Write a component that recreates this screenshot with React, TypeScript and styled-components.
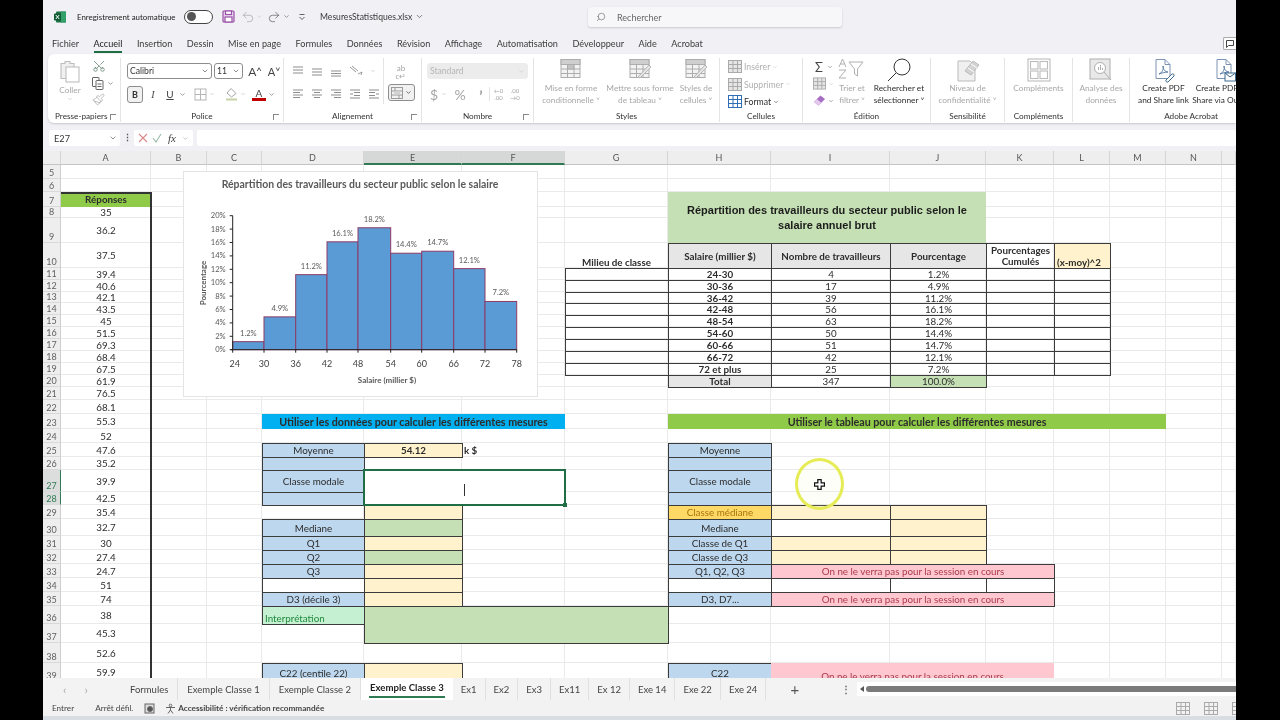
import React from "react"
import styled, { createGlobalStyle } from "styled-components"
import { ChevronDown, Paintbrush, Redo2, Scissors, Search, Undo2 } from "lucide-react"

const GlobalStyle = createGlobalStyle`
  html, body { margin: 0; padding: 0; background: #000; }
  body { font-family: "Lato", "Liberation Sans", sans-serif; }
  * { box-sizing: border-box; }
`

const COLS = [90, 56, 55, 102, 98, 103, 103, 103, 119, 96, 68, 56, 56, 56, 14]
const COL_NAMES = ["A", "B", "C", "D", "E", "F", "G", "H", "I", "J", "K", "L", "M", "N", ""]
const ROWS = [14, 13, 15, 11, 25, 25, 12, 12, 11, 12, 12, 12, 12, 12, 12, 12, 13, 14, 15, 14, 14, 13, 22, 13, 14, 17, 14, 14, 14, 14, 14, 18, 19, 20, 19]
const TEMPLATE = `18px ${COLS.map((w) => w + "px").join(" ")}`
const ANSWERS = ["35", "36.2", "37.5", "39.4", "40.6", "42.1", "43.5", "45", "51.5", "69.3", "68.4", "67.5", "61.9", "76.5", "68.1", "55.3", "52", "47.6", "35.2", "39.9", "42.5", "35.4", "32.7", "30", "27.4", "24.7", "51", "74", "38", "45.3", "52.6", "59.9"]

type Tone = "none" | "white" | "blue" | "yellow" | "sage" | "pink" | "grey" | "gold" | "mint" | "sky" | "lime"

const TONES: Record<Tone, string> = {
  none: "transparent",
  white: "#fff",
  blue: "#bdd7ee",
  yellow: "#fff2cc",
  sage: "#c5e0b4",
  pink: "#ffc7d0",
  grey: "#e7e6e6",
  gold: "#ffd966",
  mint: "#c6f0d2",
  sky: "#00b0f0",
  lime: "#8fcb48",
}

type CellDef = {
  c: string
  r: number
  cs?: number
  rs?: number
  text?: string
  tone?: Tone
  box?: boolean
  bold?: boolean
  ink?: string
  align?: string
  valign?: string
  size?: number
}

const colIndex = (c: string) => COL_NAMES.indexOf(c) + 2

const bracket = [
  ["24-30", "4", "1.2%"],
  ["30-36", "17", "4.9%"],
  ["36-42", "39", "11.2%"],
  ["42-48", "56", "16.1%"],
  ["48-54", "63", "18.2%"],
  ["54-60", "50", "14.4%"],
  ["60-66", "51", "14.7%"],
  ["66-72", "42", "12.1%"],
  ["72 et plus", "25", "7.2%"],
]

const PINK_TEXT = "On ne le verra pas pour la session en cours"
const RED_INK = "#ab3a4c"

const CELLS: CellDef[] = [
  { c: "H", r: 7, cs: 3, rs: 3, tone: "sage", text: "Répartition des travailleurs du secteur public selon le salaire annuel brut", bold: true, size: 11 },
  { c: "G", r: 10, text: "Milieu de classe", bold: true, valign: "flex-end" },
  { c: "H", r: 10, text: "Salaire (millier $)", tone: "grey", box: true, bold: true },
  { c: "I", r: 10, text: "Nombre de travailleurs", tone: "grey", box: true, bold: true },
  { c: "J", r: 10, text: "Pourcentage", tone: "grey", box: true, bold: true },
  { c: "K", r: 10, text: "Pourcentages Cumulés", box: true, bold: true },
  { c: "L", r: 10, text: "(x-moy)^2", tone: "yellow", box: true, bold: true, align: "flex-start", valign: "flex-end" },
  ...bracket.flatMap((row, i): CellDef[] => [
    { c: "G", r: 11 + i, box: true },
    { c: "H", r: 11 + i, text: row[0], box: true, bold: true },
    { c: "I", r: 11 + i, text: row[1], box: true },
    { c: "J", r: 11 + i, text: row[2], box: true },
    { c: "K", r: 11 + i, box: true },
    { c: "L", r: 11 + i, box: true },
  ]),
  { c: "H", r: 20, text: "Total", tone: "grey", box: true, bold: true },
  { c: "I", r: 20, text: "347", box: true },
  { c: "J", r: 20, text: "100.0%", tone: "sage", box: true },

  { c: "D", r: 23, cs: 3, tone: "sky", text: "Utiliser les données pour calculer les différentes mesures", bold: true, size: 10.7 },
  { c: "H", r: 23, cs: 6, tone: "lime", text: "Utiliser le tableau pour calculer les différentes mesures", bold: true, size: 10.7 },

  { c: "D", r: 25, text: "Moyenne", tone: "blue", box: true },
  { c: "E", r: 25, text: "54.12", tone: "yellow", box: true, bold: true },
  { c: "F", r: 25, text: "k $", bold: true, align: "flex-start" },
  { c: "D", r: 26, tone: "blue", box: true },
  { c: "D", r: 27, text: "Classe modale", tone: "blue", box: true },
  { c: "D", r: 28, tone: "blue", box: true },
  { c: "E", r: 29, tone: "yellow", box: true },
  { c: "D", r: 30, text: "Mediane", tone: "blue", box: true },
  { c: "E", r: 30, tone: "sage", box: true },
  { c: "D", r: 31, text: "Q1", tone: "blue", box: true },
  { c: "E", r: 31, tone: "yellow", box: true },
  { c: "D", r: 32, text: "Q2", tone: "blue", box: true },
  { c: "E", r: 32, tone: "sage", box: true },
  { c: "D", r: 33, text: "Q3", tone: "blue", box: true },
  { c: "E", r: 33, tone: "yellow", box: true },
  { c: "D", r: 34, tone: "white", box: true },
  { c: "E", r: 34, tone: "yellow", box: true },
  { c: "D", r: 35, text: "D3 (décile 3)", tone: "blue", box: true },
  { c: "E", r: 35, tone: "yellow", box: true },
  { c: "D", r: 36, text: "Interprétation", tone: "mint", box: true, ink: "#1f8a3c", align: "flex-start", valign: "flex-end" },
  { c: "E", r: 36, cs: 3, rs: 2, tone: "sage", box: true },
  { c: "D", r: 39, text: "C22 (centile 22)", tone: "blue", box: true },
  { c: "E", r: 39, tone: "yellow", box: true },

  { c: "H", r: 25, text: "Moyenne", tone: "blue", box: true },
  { c: "H", r: 26, tone: "blue", box: true },
  { c: "H", r: 27, text: "Classe modale", tone: "blue", box: true },
  { c: "H", r: 28, tone: "blue", box: true },
  { c: "H", r: 29, text: "Classe médiane", tone: "gold", box: true, ink: "#a8740a" },
  { c: "I", r: 29, tone: "yellow", box: true },
  { c: "J", r: 29, tone: "yellow", box: true },
  { c: "H", r: 30, text: "Mediane", tone: "blue", box: true },
  { c: "I", r: 30, tone: "white", box: true },
  { c: "J", r: 30, tone: "yellow", box: true },
  { c: "H", r: 31, text: "Classe de Q1", tone: "blue", box: true },
  { c: "I", r: 31, tone: "yellow", box: true },
  { c: "J", r: 31, tone: "yellow", box: true },
  { c: "H", r: 32, text: "Classe de Q3", tone: "blue", box: true },
  { c: "I", r: 32, tone: "yellow", box: true },
  { c: "J", r: 32, tone: "yellow", box: true },
  { c: "H", r: 33, text: "Q1, Q2, Q3", tone: "blue", box: true },
  { c: "I", r: 33, cs: 3, text: PINK_TEXT, tone: "pink", box: true, ink: RED_INK },
  { c: "H", r: 34, tone: "white", box: true },
  { c: "I", r: 34, tone: "white", box: true },
  { c: "J", r: 34, tone: "white", box: true },
  { c: "K", r: 34, tone: "white", box: true },
  { c: "H", r: 35, text: "D3, D7...", tone: "blue", box: true },
  { c: "I", r: 35, cs: 3, text: PINK_TEXT, tone: "pink", box: true, ink: RED_INK },
  { c: "H", r: 39, text: "C22", tone: "blue", box: true },
  { c: "I", r: 39, cs: 3, text: PINK_TEXT, tone: "pink", ink: RED_INK, valign: "flex-end" },
]

const Frame = styled.div`
  width: 1280px;
  height: 720px;
  background: #000;
  padding: 0 44px 0 43px;
  overflow: hidden;
`

const Window = styled.div`
  width: 1193px;
  height: 720px;
  display: flex;
  flex-direction: column;
  background: #f0f0f5;
  color: #333;
  overflow: hidden;
  position: relative;
  filter: blur(0.3px);
`

const TitleBar = styled.div`
  height: 33px;
  flex: none;
  display: flex;
  align-items: center;
  padding-left: 11px;
  font-size: 8.6px;
  position: relative;
`

const AutoSave = styled.span`
  margin-left: 11px;
  width: 101px;
  flex: none;
  font-size: 7.9px;
  white-space: nowrap;
  color: #222;
`

const Toggle = styled.span`
  width: 29px;
  height: 14px;
  margin-left: 6px;
  border: 1px solid #444;
  border-radius: 7px;
  background: #fff;
  display: flex;
  align-items: center;
  padding-left: 2px;
  &::before {
    content: "";
    width: 9px;
    height: 9px;
    border-radius: 50%;
    background: #555;
  }
`

const QuickIcons = styled.span`
  display: flex;
  align-items: center;
  margin-left: 9px;
  gap: 2px;
`

const FileName = styled.span`
  margin-left: 14px;
  font-size: 8.6px;
  display: flex;
  align-items: center;
  gap: 3px;
  color: #3a3a3a;
`

const SearchBox = styled.div`
  position: absolute;
  left: 545px;
  top: 7px;
  width: 254px;
  height: 20px;
  background: #f7f7f9;
  border-radius: 3px;
  box-shadow: 0 1px 2px #c9c9cf;
  display: flex;
  align-items: center;
  gap: 11px;
  padding-left: 8px;
  font-size: 9px;
  color: #666;
`

const MenuBar = styled.div`
  height: 21px;
  flex: none;
  display: flex;
  align-items: flex-start;
  padding: 5px 0 0 9px;
  gap: 14.5px;
  font-size: 9.1px;
  position: relative;
`

const MenuItem = styled.span<{ $active?: boolean }>`
  height: 15px;
  color: ${(p) => (p.$active ? "#222" : "#3c3c3c")};
  border-bottom: ${(p) => (p.$active ? "2px solid #1e6e42" : "none")};
`

const CommentBtn = styled.span`
  position: absolute;
  right: 0;
  top: 4px;
  width: 13px;
  height: 13px;
  border: 1px solid #aaa;
  border-right: none;
  border-radius: 2px 0 0 2px;
  background: #fff;
  display: flex;
  align-items: center;
  justify-content: center;
`

const Ribbon = styled.div`
  height: 69px;
  flex: none;
  margin-left: 5px;
  padding: 4px 0 1px;
  display: flex;
  background: #fff;
  border-radius: 6px 0 0 6px;
  box-shadow: 0 1px 2px #c6c6cc;
`

const Group = styled.div<{ $w: number }>`
  width: ${(p) => p.$w}px;
  flex: none;
  display: flex;
  flex-direction: column;
  border-right: 1px solid #e4e4e4;
  position: relative;
  &:last-child {
    border-right: none;
  }
`

const GroupBody = styled.div`
  flex: 1;
  display: flex;
  min-height: 0;
`

const GroupLabel = styled.div<{ $left?: boolean }>`
  height: 10px;
  flex: none;
  text-align: ${(p) => (p.$left ? "left" : "center")};
  padding-left: ${(p) => (p.$left ? "7px" : "0")};
  font-size: 8.2px;
  line-height: 9px;
  color: #333;
  white-space: nowrap;
`

const Launcher = styled.span`
  position: absolute;
  right: 4px;
  bottom: 2px;
  width: 6px;
  height: 6px;
  border-left: 1px solid #888;
  border-top: 1px solid #888;
`

const LargeBtn = styled.div<{ $w: number; $off?: boolean }>`
  width: ${(p) => p.$w}px;
  flex: none;
  display: flex;
  flex-direction: column;
  align-items: center;
  font-size: 8.3px;
  line-height: 12px;
  text-align: center;
  white-space: nowrap;
  color: ${(p) => (p.$off ? "#a8a8a8" : "#2e2e2e")};
`

const LargeIcon = styled.div<{ $tall?: boolean }>`
  height: ${(p) => (p.$tall ? 26 : 24)}px;
  padding-top: ${(p) => (p.$tall ? 2 : 0)}px;
  display: flex;
  align-items: flex-start;
  justify-content: center;
`

const ClipColumn = styled.div`
  display: flex;
  flex-direction: column;
  gap: 3px;
  padding-top: 1px;
`

const IconRow = styled.div<{ $gap?: number; $h?: number }>`
  display: flex;
  align-items: center;
  gap: ${(p) => p.$gap ?? 0}px;
  height: ${(p) => p.$h ?? 16}px;
`

const Stack = styled.div<{ $gap?: number; $pt?: number; $pl?: number; $w?: number }>`
  display: flex;
  flex-direction: column;
  gap: ${(p) => p.$gap ?? 0}px;
  padding: ${(p) => p.$pt ?? 0}px 0 0 ${(p) => p.$pl ?? 0}px;
  ${(p) => (p.$w ? `width: ${p.$w}px; flex: none;` : "")}
`

const AlignPanel = styled(Stack)`
  border-right: 1px solid #e4e4e4;
  height: 46px;
`

const Spacer = styled.span<{ $w: number }>`
  width: ${(p) => p.$w}px;
  flex: none;
`

const Select = styled.div<{ $w: number; $off?: boolean }>`
  width: ${(p) => p.$w}px;
  height: 16px;
  border: 1px solid ${(p) => (p.$off ? "#ececec" : "#8d8d8d")};
  border-radius: 3px;
  background: ${(p) => (p.$off ? "#ececec" : "#fff")};
  color: ${(p) => (p.$off ? "#b5b5b5" : "#333")};
  display: flex;
  align-items: center;
  justify-content: space-between;
  font-size: 8.6px;
  padding: 0 2px 0 2px;
`

const PressedBtn = styled.span<{ $w: number }>`
  width: ${(p) => p.$w}px;
  height: 17px;
  border: 1px solid #8d8d8d;
  border-radius: 3px;
  background: #f1f1f1;
  display: flex;
  align-items: center;
  justify-content: center;
  gap: 2px;
  font-size: 9px;
  font-weight: 700;
`

const GlyphBtn = styled.span<{ $w?: number; $serif?: boolean; $off?: boolean; $size?: number }>`
  width: ${(p) => p.$w ?? 14}px;
  flex: none;
  text-align: center;
  font-family: ${(p) => (p.$serif ? '"Liberation Serif", serif' : "inherit")};
  font-style: ${(p) => (p.$serif ? "italic" : "normal")};
  font-size: ${(p) => p.$size ?? 10}px;
  color: ${(p) => (p.$off ? "#a5a5a5" : "#444")};
`

const Underlined = styled(GlyphBtn)`
  text-decoration: underline;
`

const FontColor = styled(GlyphBtn)`
  border-bottom: 3px solid #c00000;
  line-height: 10px;
`

const WrapGlyph = styled(GlyphBtn)`
  line-height: 8px;
  height: 20px;
  padding-top: 3px;
`

const Decimals = styled(GlyphBtn)<{ $rule?: boolean }>`
  line-height: 7px;
  border-left: ${(p) => (p.$rule ? "1px solid #e4e4e4" : "none")};
`

const Thousands = styled(GlyphBtn)`
  font-weight: 900;
  line-height: 20px;
  height: 16px;
`

const CellCmd = styled.div<{ $off?: boolean }>`
  height: 17.5px;
  display: flex;
  align-items: center;
  gap: 2px;
  font-size: 8.7px;
  white-space: nowrap;
  color: ${(p) => (p.$off ? "#b0b0b0" : "#2e2e2e")};
`

const FormulaBar = styled.div`
  height: 28px;
  flex: none;
  padding: 7px 0 5px 6px;
  display: flex;
  align-items: stretch;
`

const NameBox = styled.div`
  width: 71px;
  background: #fff;
  border-radius: 2px;
  display: flex;
  align-items: center;
  justify-content: space-between;
  padding: 0 3px 0 5px;
  font-size: 9.2px;
`

const BarDots = styled.span`
  width: 14px;
  text-align: center;
  font-size: 9px;
  line-height: 16px;
  font-weight: 700;
  color: #555;
`

const FxBox = styled.div`
  width: 59px;
  background: #fff;
  border-radius: 2px;
  display: flex;
  align-items: center;
  gap: 4px;
  padding-left: 4px;
`

const FormulaInput = styled.div`
  flex: 1;
  margin-left: 4px;
  background: #fff;
  border-radius: 2px;
`

const ColHeaders = styled.div`
  height: 14px;
  flex: none;
  display: grid;
  grid-template-columns: ${TEMPLATE};
  background: #ececec;
`

const ColHead = styled.div<{ $on?: boolean }>`
  display: flex;
  align-items: center;
  justify-content: center;
  font-size: 9px;
  color: #555;
  background: ${(p) => (p.$on ? "#d6d8d7" : "#eeeeee")};
  border-right: 1px solid #d5d5d5;
  border-bottom: ${(p) => (p.$on ? "2px solid #2f7a52" : "1px solid #c4c4c4")};
`

const SheetWrap = styled.div`
  flex: 1;
  position: relative;
  overflow: hidden;
  background: #fff;
`

const Sheet = styled.div`
  display: grid;
  grid-template-columns: ${TEMPLATE};
  grid-template-rows: ${ROWS.map((h) => h + "px").join(" ")};
  color: #2c2c2c;
`

const RowHead = styled.div<{ $r: number; $on?: boolean }>`
  grid-column: 1;
  grid-row: ${(p) => p.$r - 4};
  background: ${(p) => (p.$on ? "#dcdedd" : "#eeeeee")};
  border-bottom: 1px solid #d8d8d8;
  border-right: ${(p) => (p.$on ? "1px solid #2f7a52" : "1px solid #cfcfcf")};
  color: ${(p) => (p.$on ? "#2f7a52" : "#5f5f5f")};
  font-size: 9px;
  line-height: 10px;
  display: flex;
  align-items: flex-end;
  justify-content: center;
`

const GridLine = styled.div<{ $c: number; $r: number }>`
  grid-column: ${(p) => p.$c};
  grid-row: ${(p) => p.$r};
  border-right: 1px solid #eaeaea;
  border-bottom: 1px solid #eaeaea;
`

const AnswerFrame = styled.div`
  grid-column: 2;
  grid-row: 3 / span 33;
  border-top: 2px solid #333;
  border-right: 2px solid #333;
  margin-right: -1px;
`

const Cell = styled.div<{
  $c: number
  $r: number
  $cs?: number
  $rs?: number
  $tone?: Tone
  $box?: boolean
  $bold?: boolean
  $ink?: string
  $align?: string
  $valign?: string
  $size?: number
}>`
  grid-column: ${(p) => p.$c} / span ${(p) => p.$cs ?? 1};
  grid-row: ${(p) => p.$r - 4} / span ${(p) => p.$rs ?? 1};
  display: flex;
  min-width: 0;
  min-height: 0;
  overflow: hidden;
  align-items: ${(p) => p.$valign ?? "center"};
  justify-content: ${(p) => p.$align ?? "center"};
  text-align: center;
  padding: 0 2px;
  line-height: 1.12;
  background: ${(p) => TONES[p.$tone ?? "none"]};
  font-weight: ${(p) => (p.$bold ? 700 : 400)};
  font-size: ${(p) => p.$size ?? 9.8}px;
  color: ${(p) => p.$ink ?? "#2c2c2c"};
  ${(p) => (p.$box ? "border: 1px solid #3b3b3b; margin: 0 -1px -1px 0;" : "")}
`

const TableTitle = styled.span`
  font-family: "Liberation Sans", Arial, sans-serif;
  line-height: 15px;
  padding: 0 14px;
  color: #1c1c1c;
`

const Selection = styled.div`
  grid-column: 6 / span 2;
  grid-row: 23 / span 2;
  background: #fff;
  border: 2px solid #1f6e45;
  margin: -1px -1px -1px -1px;
  display: flex;
  align-items: center;
  position: relative;
  padding-left: 99px;
  &::after {
    content: "";
    position: absolute;
    right: -3px;
    bottom: -3px;
    width: 4px;
    height: 4px;
    background: #1f6e45;
  }
`

const Caret = styled.span`
  width: 1px;
  height: 12px;
  background: #333;
  margin-top: 5px;
`

const ChartBox = styled.div`
  position: absolute;
  left: 140px;
  top: 6px;
  width: 355px;
  height: 226px;
  background: #fff;
  border: 1px solid #e4e4e4;
`

const CursorRing = styled.div`
  position: absolute;
  left: 752px;
  top: 293px;
  width: 49px;
  height: 52px;
  border: 3px solid #e6ec55;
  border-radius: 50%;
  background: rgba(250, 250, 200, 0.12);
  display: flex;
  align-items: center;
  justify-content: center;
`

const TabsBar = styled.div`
  height: 22px;
  flex: none;
  display: flex;
  align-items: center;
  background: #f3f3f3;
  font-size: 9.5px;
  color: #444;
  position: relative;
`

const TabArrows = styled.div`
  width: 78px;
  flex: none;
  display: flex;
  gap: 18px;
  padding-left: 20px;
  font-size: 12px;
  color: #aaa;
`

const Tab = styled.div<{ $active?: boolean; $wide?: boolean }>`
  height: 100%;
  flex: none;
  padding: 0 ${(p) => (p.$wide ? 9 : 8)}px;
  display: flex;
  align-items: center;
  border-right: ${(p) => (p.$active ? "none" : "1px solid #e0e0e0")};
  ${(p) =>
    p.$active
      ? `background: #fff; color: #1e1e1e; font-weight: 700; font-size: 9.6px; align-items: flex-start; padding-top: 4px; position: relative;
         &::after { content: ""; position: absolute; left: 8px; right: 8px; bottom: 2px; height: 2px; background: #2f7a52; }`
      : ""}
`

const AddTab = styled.span`
  margin-left: 24px;
  font-size: 15px;
  line-height: 15px;
  color: #555;
`

const TabDots = styled.span`
  margin-left: 42px;
  font-weight: 700;
  font-size: 10px;
  color: #666;
`

const ScrollTrack = styled.div`
  flex: 1;
  margin-left: 6px;
  height: 14px;
  background: #fff;
  display: flex;
  align-items: center;
  padding-left: 3px;
  gap: 2px;
  &::before {
    content: "";
    border-right: 4px solid #555;
    border-top: 3px solid transparent;
    border-bottom: 3px solid transparent;
  }
`

const ScrollThumb = styled.div`
  flex: 1;
  height: 6px;
  background: #7b7b7b;
  border-radius: 3px 0 0 3px;
`

const StatusBar = styled.div`
  height: 16px;
  flex: none;
  display: flex;
  align-items: center;
  padding-left: 9px;
  background: #f2f2f2;
  font-size: 8.2px;
  color: #444;
  position: relative;
`

const StatusItem = styled.span<{ $ml: number; $bold?: boolean }>`
  margin-left: ${(p) => p.$ml}px;
  font-weight: ${(p) => (p.$bold ? 700 : 400)};
  display: flex;
  align-items: center;
  gap: 2px;
  white-space: nowrap;
`

const ViewIcons = styled.div`
  margin-left: auto;
  display: flex;
  gap: 14px;
  margin-right: -10px;
`

const BottomStrip = styled.div`
  height: 4px;
  flex: none;
  background: #d8dde4;
`

function Lines({ rows, color = "#8d8d8d", size = 12 }: { rows: [number, number, number][]; color?: string; size?: number }) {
  return (
    <svg width={size} height={size} viewBox="0 0 12 12" stroke={color} strokeWidth="1" fill="none">
      {rows.map(([a, b, y]) => (
        <line key={y} x1={a} x2={b} y1={y} y2={y} />
      ))}
    </svg>
  )
}

function ExcelLogo() {
  return (
    <svg width="12" height="12" viewBox="0 0 12 12">
      <rect x="2" y="0.5" width="10" height="11" rx="1" fill="#1e7145" />
      <rect x="7" y="0.5" width="5" height="11" fill="#33a06a" />
      <rect x="0" y="2.5" width="7" height="7" rx="0.8" fill="#0f5c34" />
      <path d="M1.8 4 L5.2 8 M5.2 4 L1.8 8" stroke="#fff" strokeWidth="1" />
    </svg>
  )
}

function SaveIcon() {
  return (
    <svg width="13" height="13" viewBox="0 0 13 13" fill="none" stroke="#9a4fa8" strokeWidth="1.2">
      <rect x="1" y="1" width="11" height="11" rx="1" fill="#e9d9ee" />
      <rect x="3.5" y="1" width="6" height="3.5" fill="#fff" />
      <rect x="3" y="7" width="7" height="5" fill="#fff" />
    </svg>
  )
}

function QatIcon() {
  return (
    <svg width="8" height="8" viewBox="0 0 8 8" fill="none" stroke="#666">
      <path d="M1.500 1.500h5M1.500 4l2.500 2.500L6.500 4" />
    </svg>
  )
}

function PasteIcon() {
  return (
    <svg width="20" height="23" viewBox="0 0 20 23" fill="none" stroke="#bdbdbd" strokeWidth="1.1">
      <path d="M1 3.5h4v-2h5v2h4v15H1z" fill="#f0f0f0" />
      <rect x="6" y="7" width="13" height="15" fill="#fff" />
    </svg>
  )
}

function CopyIcon() {
  return (
    <svg width="12" height="13" viewBox="0 0 12 13" fill="none" stroke="#666" strokeWidth="1">
      <rect x="0.5" y="0.5" width="6.5" height="9" rx="0.5" />
      <rect x="4" y="3.5" width="7" height="9" fill="#fff" rx="0.5" />
      <path d="M5.5 7h4M5.5 9.5h4" />
    </svg>
  )
}

function BordersIcon({ color = "#b5b5b5" }: { color?: string }) {
  return (
    <svg width="13" height="13" viewBox="0 0 13 13" fill="none" stroke={color}>
      <rect x="1" y="1" width="11" height="11" />
      <path d="M6.5 1v11M1 6.5h11" />
    </svg>
  )
}

function FillIcon() {
  return (
    <svg width="13" height="14" viewBox="0 0 13 14" fill="none" stroke="#a5a5a5">
      <path d="M6 1.5 L11 6.5 L6.5 10 L2 6z" />
      <rect x="1" y="11.5" width="11" height="2" fill="#c7d3a5" stroke="none" />
    </svg>
  )
}

function OrientIcon() {
  return (
    <svg width="14" height="12" viewBox="0 0 14 12" fill="none" stroke="#9a9a9a">
      <path d="M1 2l6 5M3 1l6 5M9 9l4-2-1 3" />
    </svg>
  )
}

function MergeIcon() {
  return (
    <svg width="12" height="12" viewBox="0 0 12 12" fill="none" stroke="#9b9b9b">
      <rect x="0.5" y="0.5" width="11" height="11" />
      <path d="M0.5 4h11M0.5 8h11M4 0.5v3.500M8 8v3.500" />
      <rect x="3" y="4.500" width="6" height="3" fill="#d3d3d3" stroke="none" />
    </svg>
  )
}

function TableIcon({ variant }: { variant: "cf" | "table" | "cell" }) {
  return (
    <svg width="24" height="22" viewBox="0 0 24 22" fill="none" stroke="#adadad">
      <rect x="2" y="1.500" width="19" height="18" fill="#f3f3f3" />
      <path d="M2 6.500h19M2 11h19M2 15.500h19M8.500 1.500v18M15 1.500v18" />
      <rect x="2" y="1.500" width="19" height="5" fill="#cfcfcf" />
      {variant === "cf" ? <rect x="8.500" y="6.500" width="6.500" height="4.500" fill="#c4c4c4" /> : null}
      {variant !== "cf" ? <path d="M10 19 L21 7 L23 9 L12 20z" fill="#e6e6e6" stroke="#b5b5b5" /> : null}
    </svg>
  )
}

function SmallGrid({ color = "#aaa", fill = "#e6e6e6" }: { color?: string; fill?: string }) {
  return (
    <svg width="14" height="13" viewBox="0 0 14 13" fill="none" stroke={color}>
      <rect x="0.500" y="0.500" width="13" height="12" fill={fill} />
      <path d="M0.500 4.500h13M0.500 8.500h13M5 0.500v12M9.500 0.500v12" />
    </svg>
  )
}

function SortIcon() {
  return (
    <svg width="30" height="22" viewBox="0 0 30 22" fill="none" stroke="#b0b0b0">
      <path d="M2 9 L5.500 1 L9 9M3.500 6h4M2 12h7L2 20h7" />
      <path d="M12 4h14l-5.500 7v7l-3-2v-5z" />
    </svg>
  )
}

function FindIcon() {
  return (
    <svg width="26" height="24" viewBox="0 0 26 24" fill="none" stroke="#333" strokeWidth="1">
      <circle cx="16" cy="9" r="8" />
      <path d="M10 15 L2 23" />
    </svg>
  )
}

function EraseIcon() {
  return (
    <svg width="14" height="13" viewBox="0 0 14 13">
      <path d="M1 8 L8 1 L13 5 L6 12z" fill="#a66ec2" />
      <path d="M1 8 L4 5 L9 9 L6 12z" fill="#e3c9ee" />
    </svg>
  )
}

function SensIcon() {
  return (
    <svg width="26" height="25" viewBox="0 0 26 25" fill="none" stroke="#bbb">
      <path d="M3 3h12l5 5v15H3z" fill="#f0f0f0" />
      <path d="M10 13 L18 3 L24 7 L16 17z" fill="#d3d3d3" />
      <path d="M13 10l6 4M16 6l6 4" stroke="#fff" />
    </svg>
  )
}

function AddinIcon() {
  return (
    <svg width="24" height="24" viewBox="0 0 24 24" fill="none" stroke="#bcbcbc" strokeWidth="1.1">
      <rect x="1" y="1" width="22" height="22" />
      <rect x="3.500" y="3.500" width="7.500" height="7.500" />
      <rect x="13" y="3.500" width="7.500" height="7.500" />
      <rect x="3.500" y="13" width="7.500" height="7.500" />
      <rect x="13" y="13" width="7.500" height="7.500" />
    </svg>
  )
}

function AnalyzeIcon() {
  return (
    <svg width="24" height="24" viewBox="0 0 24 24" fill="none" stroke="#aeaeae">
      <rect x="1" y="1" width="20" height="20" fill="#e9e9e9" />
      <circle cx="11" cy="10" r="5.500" fill="#fff" />
      <path d="M15 14l7 8M9.500 12V9M11.500 12V7M13.500 12v-2" />
    </svg>
  )
}

function PdfIcon({ mail }: { mail?: boolean }) {
  return (
    <svg width="22" height="25" viewBox="0 0 22 25" fill="none" stroke="#7c93b4" strokeWidth="1">
      <path d="M3 1.500h9l5 5v14H3z" fill="#fff" />
      <path d="M12 1.500v5h5" />
      <path d="M6 16c3-1 5-5 4-8 0 3 2 6 5 6-3 0-6 1-9 2z" stroke="#5d7ea8" />
      {mail ? (
        <g stroke="#3d6b8f">
          <rect x="11" y="15" width="10.500" height="8" fill="#fff" />
          <path d="M11 15l5 4 5.500-4" />
        </g>
      ) : (
        <path d="M13 22l6-6a1.500 1.500 0 0 1 2 2l-6 6a1.500 1.500 0 0 1-2-2z" stroke="#3d6b8f" fill="#fff" />
      )}
    </svg>
  )
}

function Chevron({ size = 8, color = "#666" }: { size?: number; color?: string }) {
  return <ChevronDown size={size} color={color} strokeWidth={2.2} style={{ flex: "none" }} />
}

function Histogram() {
  const edges = [49.7, 81, 112.7, 144, 175, 207.7, 238.7, 270.7, 302, 333.7]
  const values = [1.2, 4.9, 11.2, 16.1, 18.2, 14.4, 14.7, 12.1, 7.2]
  const bins = [24, 30, 36, 42, 48, 54, 60, 66, 72, 78]
  const y0 = 178.7
  const unit = 6.7
  return (
    <svg width="353" height="224" viewBox="1 1 353 224" fontFamily="Lato, sans-serif">
      <text x="177" y="17" textAnchor="middle" fontSize="10.45" fontWeight="700" fill="#595959">
        Répartition des travailleurs du secteur public selon le salaire
      </text>
      {values.map((v, i) => (
        <g key={i}>
          <rect x={edges[i]} y={y0 - v * unit} width={edges[i + 1] - edges[i]} height={v * unit} fill="#5b9bd5" stroke="#8c3b66" strokeWidth="1" />
          <text x={(edges[i] + edges[i + 1]) / 2} y={y0 - v * unit - 6} textAnchor="middle" fontSize="7.6" fill="#595959">
            {v.toFixed(1)}%
          </text>
        </g>
      ))}
      <line x1={edges[0]} x2={edges[0]} y1={y0 - 20 * unit} y2={y0} stroke="#222" />
      <line x1={edges[0] - 2} x2={edges[9]} y1={y0} y2={y0} stroke="#222" />
      {[0, 2, 4, 6, 8, 10, 12, 14, 16, 18, 20].map((t) => (
        <g key={t}>
          <line x1={edges[0] - 3} x2={edges[0]} y1={y0 - t * unit} y2={y0 - t * unit} stroke="#222" />
          <text x={edges[0] - 7} y={y0 - t * unit + 2.5} textAnchor="end" fontSize="7.6" fill="#595959">
            {t}%
          </text>
        </g>
      ))}
      {bins.map((b, i) => (
        <g key={b}>
          <line x1={edges[i]} x2={edges[i]} y1={y0} y2={y0 + 3} stroke="#222" />
          <text x={edges[i] + (i === 0 ? 2 : 0)} y={y0 + 17} textAnchor="middle" fontSize="9" fill="#404040">
            {b}
          </text>
        </g>
      ))}
      <text x="204" y="212" textAnchor="middle" fontSize="8" fontWeight="700" fill="#595959">
        Salaire (millier $)
      </text>
      <text transform="translate(23 112) rotate(-90)" textAnchor="middle" fontSize="8" fontWeight="700" fill="#595959">
        Pourcentage
      </text>
    </svg>
  )
}

const MENU = ["Fichier", "Accueil", "Insertion", "Dessin", "Mise en page", "Formules", "Données", "Révision", "Affichage", "Automatisation", "Développeur", "Aide", "Acrobat"]
const TABS = ["Formules", "Exemple Classe 1", "Exemple Classe 2", "Exemple Classe 3", "Ex1", "Ex2", "Ex3", "Ex11", "Ex 12", "Exe 14", "Exe 22", "Exe 24"]

function RibbonBar() {
  return (
    <Ribbon>
      <Group $w={73}>
        <GroupBody>
          <LargeBtn $w={44} $off>
            <LargeIcon $tall>
              <PasteIcon />
            </LargeIcon>
            <span>Coller</span>
            <Chevron size={6} color="#bbb" />
          </LargeBtn>
          <ClipColumn>
            <Scissors size={14} color="#5d7f70" strokeWidth={1.3} style={{ transform: "rotate(-90deg)" }} />
            <IconRow $gap={3} $h={14}>
              <CopyIcon />
              <Chevron size={7} />
            </IconRow>
            <Paintbrush size={13} color="#aaa" strokeWidth={1.4} />
          </ClipColumn>
        </GroupBody>
        <GroupLabel $left>Presse-papiers</GroupLabel>
        <Launcher />
      </Group>

      <Group $w={163}>
        <GroupBody>
          <Stack $pt={5} $pl={6} $gap={7}>
            <IconRow $gap={2}>
              <Select $w={85}>
                Calibri <Chevron />
              </Select>
              <Select $w={29}>
                11 <Chevron />
              </Select>
              <GlyphBtn $w={20} $size={12}>
                A˄
              </GlyphBtn>
              <GlyphBtn $w={14} $size={11}>
                A˅
              </GlyphBtn>
            </IconRow>
            <IconRow $gap={2}>
              <PressedBtn $w={16}>B</PressedBtn>
              <GlyphBtn $w={16} $serif>
                I
              </GlyphBtn>
              <Underlined $w={14}>U</Underlined>
              <Chevron size={7} />
              <Spacer $w={4} />
              <BordersIcon />
              <Chevron size={6} color="#bbb" />
              <Spacer $w={6} />
              <FillIcon />
              <Chevron size={6} color="#bbb" />
              <Spacer $w={2} />
              <FontColor $w={14}>A</FontColor>
              <Chevron size={7} />
            </IconRow>
          </Stack>
        </GroupBody>
        <GroupLabel>Police</GroupLabel>
        <Launcher />
      </Group>

      <Group $w={138}>
        <GroupBody>
          <AlignPanel $w={100} $pt={5} $pl={8} $gap={7}>
            <IconRow $gap={7}>
              <Lines rows={[[1, 11, 2], [1, 11, 5], [1, 11, 8]]} />
              <Lines rows={[[1, 11, 4], [1, 11, 7], [1, 11, 10]]} />
              <Lines rows={[[1, 11, 6], [1, 11, 8.5], [1, 11, 11]]} />
              <OrientIcon />
              <Chevron size={6} color="#bbb" />
            </IconRow>
            <IconRow $gap={7}>
              <Lines rows={[[1, 11, 2], [1, 8, 4.5], [1, 11, 7], [1, 8, 9.5]]} />
              <Lines rows={[[1, 11, 2], [3, 9, 4.5], [1, 11, 7], [3, 9, 9.5]]} />
              <Lines rows={[[1, 11, 2], [4, 11, 4.5], [1, 11, 7], [4, 11, 9.5]]} />
              <Lines rows={[[1, 11, 2], [5, 11, 4.5], [1, 4, 6], [5, 11, 7.5], [1, 11, 10]]} />
              <Lines rows={[[1, 11, 2], [1, 7, 4.5], [8, 11, 6], [1, 7, 7.5], [1, 11, 10]]} />
            </IconRow>
          </AlignPanel>
          <Stack $pt={3} $pl={4} $gap={3}>
            <WrapGlyph $w={26} $size={8} $off>
              ab
              <br />
              c↵
            </WrapGlyph>
            <PressedBtn $w={27}>
              <MergeIcon />
              <Chevron size={7} color="#333" />
            </PressedBtn>
          </Stack>
        </GroupBody>
        <GroupLabel>Alignement</GroupLabel>
        <Launcher />
      </Group>

      <Group $w={112}>
        <GroupBody>
          <Stack $pt={5} $pl={5} $gap={7}>
            <Select $w={101} $off>
              Standard <Chevron size={7} color="#ccc" />
            </Select>
            <IconRow>
              <GlyphBtn $w={14} $size={14} $off>
                $
              </GlyphBtn>
              <Chevron size={6} color="#bbb" />
              <GlyphBtn $w={26} $size={14} $off>
                %
              </GlyphBtn>
              <Thousands $w={16} $size={15} $off>
                ’
              </Thousands>
              <Decimals $w={18} $size={6} $off $rule>
                ←0
                <br />
                .00
              </Decimals>
              <Decimals $w={16} $size={6} $off>
                .00
                <br />
                →0
              </Decimals>
            </IconRow>
          </Stack>
        </GroupBody>
        <GroupLabel>Nombre</GroupLabel>
        <Launcher />
      </Group>

      <Group $w={186}>
        <GroupBody>
          <LargeBtn $w={74} $off>
            <LargeIcon>
              <TableIcon variant="cf" />
            </LargeIcon>
            Mise en forme
            <br />
            conditionnelle ˅
          </LargeBtn>
          <LargeBtn $w={64} $off>
            <LargeIcon>
              <TableIcon variant="table" />
            </LargeIcon>
            Mettre sous forme
            <br />
            de tableau ˅
          </LargeBtn>
          <LargeBtn $w={48} $off>
            <LargeIcon>
              <TableIcon variant="cell" />
            </LargeIcon>
            Styles de
            <br />
            cellules ˅
          </LargeBtn>
        </GroupBody>
        <GroupLabel>Styles</GroupLabel>
      </Group>

      <Group $w={83}>
        <GroupBody>
          <Stack $pl={8}>
            <CellCmd $off>
              <SmallGrid />
              Insérer <Chevron size={6} color="#ccc" />
            </CellCmd>
            <CellCmd $off>
              <SmallGrid />
              Supprimer <Chevron size={6} color="#ccc" />
            </CellCmd>
            <CellCmd>
              <SmallGrid color="#2f6db5" fill="#fff" />
              Format <Chevron size={6} color="#333" />
            </CellCmd>
          </Stack>
        </GroupBody>
        <GroupLabel>Cellules</GroupLabel>
      </Group>

      <Group $w={128}>
        <GroupBody>
          <Stack $w={31} $pl={10}>
            <IconRow $gap={2} $h={17}>
              <GlyphBtn $w={12} $size={13}>
                Σ
              </GlyphBtn>
              <Chevron size={6} />
            </IconRow>
            <IconRow $gap={2} $h={17}>
              <SmallGrid />
              <Chevron size={6} color="#ccc" />
            </IconRow>
            <IconRow $gap={2} $h={17}>
              <EraseIcon />
              <Chevron size={6} />
            </IconRow>
          </Stack>
          <LargeBtn $w={36} $off>
            <LargeIcon>
              <SortIcon />
            </LargeIcon>
            Trier et
            <br />
            filtrer ˅
          </LargeBtn>
          <LargeBtn $w={58}>
            <LargeIcon>
              <FindIcon />
            </LargeIcon>
            Rechercher et
            <br />
            sélectionner ˅
          </LargeBtn>
        </GroupBody>
        <GroupLabel>Édition</GroupLabel>
      </Group>

      <Group $w={74}>
        <GroupBody>
          <LargeBtn $w={73} $off>
            <LargeIcon>
              <SensIcon />
            </LargeIcon>
            Niveau de
            <br />
            confidentialité ˅
          </LargeBtn>
        </GroupBody>
        <GroupLabel>Sensibilité</GroupLabel>
      </Group>

      <Group $w={68}>
        <GroupBody>
          <LargeBtn $w={67} $off>
            <LargeIcon>
              <AddinIcon />
            </LargeIcon>
            Compléments
          </LargeBtn>
        </GroupBody>
        <GroupLabel>Compléments</GroupLabel>
      </Group>

      <Group $w={57}>
        <GroupBody>
          <LargeBtn $w={56} $off>
            <LargeIcon>
              <AnalyzeIcon />
            </LargeIcon>
            Analyse des
            <br />
            données
          </LargeBtn>
        </GroupBody>
        <GroupLabel />
      </Group>

      <Group $w={122}>
        <GroupBody>
          <LargeBtn $w={67}>
            <LargeIcon>
              <PdfIcon />
            </LargeIcon>
            Create PDF
            <br />
            and Share link
          </LargeBtn>
          <LargeBtn $w={55}>
            <LargeIcon>
              <PdfIcon mail />
            </LargeIcon>
            Create PDF and
            <br />
            Share via Outlook
          </LargeBtn>
        </GroupBody>
        <GroupLabel>Adobe Acrobat</GroupLabel>
      </Group>
    </Ribbon>
  )
}

export default function App() {
  return (
    <Frame>
      <GlobalStyle />
      <Window>
        <TitleBar>
          <ExcelLogo />
          <AutoSave>Enregistrement automatique</AutoSave>
          <Toggle />
          <QuickIcons>
            <SaveIcon />
            <Spacer $w={2} />
            <Undo2 size={14} color="#a9a9a9" strokeWidth={1.3} />
            <Chevron size={5} color="#bbb" />
            <Spacer $w={1} />
            <Redo2 size={14} color="#666" strokeWidth={1.3} />
            <Chevron size={7} />
            <Spacer $w={4} />
            <QatIcon />
          </QuickIcons>
          <FileName>
            MesuresStatistiques.xlsx <Chevron size={9} />
          </FileName>
          <SearchBox>
            <Search size={10} color="#666" strokeWidth={1.5} style={{ transform: "scaleX(-1)" }} />
            Rechercher
          </SearchBox>
        </TitleBar>

        <MenuBar>
          {MENU.map((m) => (
            <MenuItem key={m} $active={m === "Accueil"}>
              {m}
            </MenuItem>
          ))}
          <CommentBtn>
            <svg width="8" height="8" viewBox="0 0 8 8" fill="none" stroke="#444">
              <path d="M0.500 0.500h7v5h-5l-2 2z" />
            </svg>
          </CommentBtn>
        </MenuBar>

        <RibbonBar />

        <FormulaBar>
          <NameBox>
            E27 <Chevron />
          </NameBox>
          <BarDots>⋮</BarDots>
          <FxBox>
            <svg width="10" height="10" viewBox="0 0 10 10" stroke="#d98a8a" strokeWidth="1.1">
              <path d="M1 1l8 8M9 1l-8 8" />
            </svg>
            <svg width="10" height="10" viewBox="0 0 10 10" stroke="#9cbca9" strokeWidth="1.1" fill="none">
              <path d="M1 5l3 4 5-8" />
            </svg>
            <GlyphBtn $w={12} $serif $size={11}>
              fx
            </GlyphBtn>
            <Chevron size={7} color="#aaa" />
          </FxBox>
          <FormulaInput />
        </FormulaBar>

        <ColHeaders>
          <ColHead />
          {COL_NAMES.map((n, i) => (
            <ColHead key={i} $on={n === "E" || n === "F"}>
              {n}
            </ColHead>
          ))}
        </ColHeaders>

        <SheetWrap>
          <Sheet>
            {ROWS.map((_, i) => (
              <RowHead key={i} $r={i + 5} $on={i + 5 === 27 || i + 5 === 28}>
                {i + 5}
              </RowHead>
            ))}
            {ROWS.flatMap((_, r) =>
              COLS.map((_w, c) => <GridLine key={`${r}-${c}`} $c={c + 2} $r={r + 1} />)
            )}
            <Cell $c={2} $r={7} $tone="lime" $bold>
              Réponses
            </Cell>
            {ANSWERS.map((v, i) => (
              <Cell key={v + i} $c={2} $r={8 + i}>
                {v}
              </Cell>
            ))}
            <AnswerFrame />
            {CELLS.map((d, i) => (
              <Cell
                key={i}
                $c={colIndex(d.c)}
                $r={d.r}
                $cs={d.cs}
                $rs={d.rs}
                $tone={d.tone}
                $box={d.box}
                $bold={d.bold}
                $ink={d.ink}
                $align={d.align}
                $valign={d.valign}
                $size={d.size}
              >
                {d.r === 7 ? <TableTitle>{d.text}</TableTitle> : d.text}
              </Cell>
            ))}
            <Selection>
              <Caret />
            </Selection>
          </Sheet>

          <ChartBox>
            <Histogram />
          </ChartBox>

          <CursorRing>
            <svg width="11" height="11" viewBox="0 0 10 10" fill="#fff" stroke="#111" strokeWidth="1.1">
              <path d="M3.500 0.500h3v3h3v3h-3v3h-3v-3h-3v-3h3z" />
            </svg>
          </CursorRing>
        </SheetWrap>

        <TabsBar>
          <TabArrows>
            <span>‹</span>
            <span>›</span>
          </TabArrows>
          {TABS.map((t, i) => (
            <Tab key={t} $active={t === "Exemple Classe 3"} $wide={i < 4}>
              {t}
            </Tab>
          ))}
          <AddTab>+</AddTab>
          <TabDots>⋮</TabDots>
          <ScrollTrack>
            <ScrollThumb />
          </ScrollTrack>
        </TabsBar>

        <StatusBar>
          <StatusItem $ml={0}>Entrer</StatusItem>
          <StatusItem $ml={21}>Arrêt défil.</StatusItem>
          <StatusItem $ml={11}>
            <svg width="11" height="11" viewBox="0 0 11 11" fill="none" stroke="#666">
              <rect x="1" y="1" width="9" height="9" fill="#ddd" />
              <circle cx="6" cy="6" r="2.500" fill="#555" />
            </svg>
          </StatusItem>
          <StatusItem $ml={10} $bold>
            <svg width="11" height="11" viewBox="0 0 11 11" fill="none" stroke="#666">
              <circle cx="5.500" cy="2.500" r="1.300" />
              <path d="M1 4.500h9M5.500 4.500v2.500M5.500 7l-2.500 3.500M5.500 7l2.500 3.500" />
            </svg>
            Accessibilité : vérification recommandée
          </StatusItem>
          <ViewIcons>
            <SmallGrid color="#aaa" fill="#f2f2f2" />
            <SmallGrid color="#aaa" fill="#f2f2f2" />
            <SmallGrid color="#aaa" fill="#f2f2f2" />
          </ViewIcons>
        </StatusBar>
        <BottomStrip />
      </Window>
    </Frame>
  )
}
